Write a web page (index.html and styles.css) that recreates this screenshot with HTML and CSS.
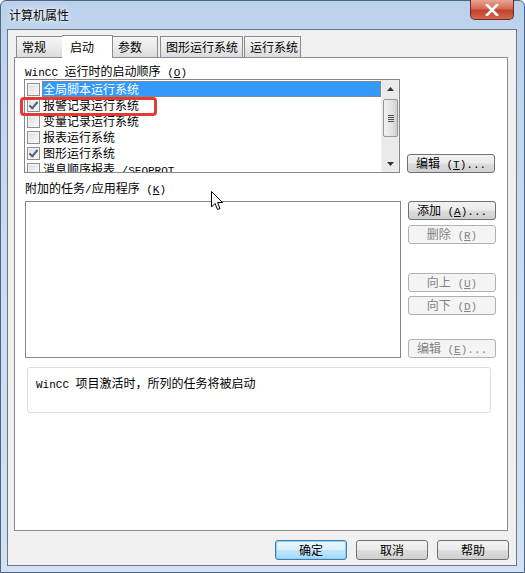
FILE: index.html
```html
<!DOCTYPE html>
<html lang="zh-CN">
<head>
<meta charset="UTF-8">
<title>计算机属性</title>
<link rel="stylesheet" href="styles.css">
</head>
<body>
<div class="window">
  <div class="titlebar">
    <span class="title">计算机属性</span>
    <div class="close">
      <svg width="14" height="12" viewBox="0 0 14 12"><path d="M2 1 L12 11 M12 1 L2 11" stroke="#fff" stroke-width="2.6" stroke-linecap="square"/></svg>
    </div>
  </div>
  <div class="client">
    <div class="tabs">
      <div class="tab w46">常规</div>
      <div class="tab tab-on w51">启动</div>
      <div class="tab w45">参数</div>
      <div class="tab w83 ml2">图形运行系统</div>
      <div class="tab w57 ml1">运行系统</div>
    </div>
    <div class="panel">
      <div class="label"><span class="lat">WinCC </span>运行时的启动顺序<span class="lat"> (<u>O</u>)</span></div>
      <div class="row">
        <div class="listbox list1">
          <div class="items">
            <div class="item"><span class="cb"></span><span class="txt sel">全局脚本运行系统</span></div>
            <div class="item"><span class="cb on"></span><span class="txt">报警记录运行系统</span></div>
            <div class="item"><span class="cb"></span><span class="txt">变量记录运行系统</span></div>
            <div class="item"><span class="cb"></span><span class="txt">报表运行系统</span></div>
            <div class="item"><span class="cb on"></span><span class="txt">图形运行系统</span></div>
            <div class="item"><span class="cb"></span><span class="txt">消息顺序报表<span class="lat"> /SEQPROT</span></span></div>
          </div>
          <div class="scrollbar">
            <div class="arrow"><svg width="7" height="4" viewBox="0 0 7 4"><path d="M0 4 L3.5 0 L7 4Z" fill="#333"/></svg></div>
            <div class="thumb"><span></span><span></span><span></span><span></span></div>
            <div class="track"></div>
            <div class="arrow"><svg width="7" height="4" viewBox="0 0 7 4"><path d="M0 0 L3.5 4 L7 0Z" fill="#333"/></svg></div>
          </div>
        </div>
        <div class="side bottom">
          <button class="btn">编辑<span class="lat"> (<u>T</u>)...</span></button>
        </div>
      </div>
      <div class="label label2">附加的任务<span class="lat">/</span>应用程序<span class="lat"> (<u>K</u>)</span></div>
      <div class="row">
        <div class="listbox list2"></div>
        <div class="side">
          <button class="btn">添加<span class="lat"> (<u>A</u>)...</span></button>
          <button class="btn off mt5">删除<span class="lat"> (<u>R</u>)</span></button>
          <button class="btn off mt29">向上<span class="lat"> (<u>U</u>)</span></button>
          <button class="btn off mt4">向下<span class="lat"> (<u>D</u>)</span></button>
          <button class="btn off mt24">编辑<span class="lat"> (<u>E</u>)...</span></button>
        </div>
      </div>
      <div class="info"><span class="lat">WinCC </span>项目激活时，所列的任务将被启动</div>
    </div>
    <div class="footer">
      <button class="btn big default">确定</button>
      <button class="btn big">取消</button>
      <button class="btn big">帮助</button>
    </div>
  </div>
  <div class="mark"></div>
  <svg class="cursor" width="13" height="20" viewBox="0 0 13 20"><path d="M0.5 0.5 L0.5 16 L4 12.5 L6.5 18.5 L9 17.5 L6.5 11.5 L11.5 11.5 Z" fill="#fff" stroke="#000" stroke-width="1"/></svg>
</div>
</body>
</html>
```

FILE: styles.css
```css
html, body { margin: 0; padding: 0; }
body { width: 525px; height: 573px; overflow: hidden; background: #fff; }

.window {
  position: relative;
  width: 525px; height: 573px;
  box-sizing: border-box;
  border: 1px solid #4f6683;
  border-radius: 6px 6px 0 0;
  background: linear-gradient(180deg, #bcd2ec 0%, #c9dbf0 40%, #d2e2f3 100%);
  padding: 0 7px 7px 6px;
  font-family: "Noto Sans CJK SC", sans-serif;
  font-size: 12px;
  color: #000;
}

/* latin part of the dialog text, narrow like the bitmap font */
.lat { font-family: "Liberation Mono", monospace; font-size: 11px; }

.titlebar { height: 28px; display: flex; align-items: center; }
.title {
  font-size: 12px;
  margin-left: 2px; margin-top: -2px;
  text-shadow: 0 0 6px #fff, 0 0 3px #fff;
}
.close {
  position: absolute; top: -1px; right: 10px;
  width: 44px; height: 20px; box-sizing: border-box;
  border: 1px solid #6e2a20; border-top: none;
  border-radius: 0 0 5px 5px;
  background: linear-gradient(180deg, #e8a596 0%, #d46a55 45%, #c2432c 55%, #d2694e 100%);
  display: flex; align-items: center; justify-content: center;
}

.client {
  height: 537px; box-sizing: border-box;
  border: 1px solid #6a7686;
  background: #f0f0f0;
  padding: 4px 8px 0 6px;
  display: flex; flex-direction: column;
}

.tabs { display: flex; height: 23px; padding-left: 2px; align-items: flex-end; }
.tab {
  height: 21px; box-sizing: border-box;
  border: 1px solid #898c95; border-bottom: none; border-right: none;
  background: linear-gradient(180deg, #f4f4f4 0%, #ebebeb 50%, #dcdcdc 100%);
  font-size: 12px;
  line-height: 19px; padding-left: 5px;
}
.tab + .tab { border-left: none; }
.tab:last-child, .tab.w83 { border-right: 1px solid #898c95; }
.tab.w45 { border-right: 1px solid #898c95; }
.tab.w46 { border-right: none; }
.tab-on {
  height: 23px; background: #fff;
  border: 1px solid #898c95; border-bottom: none;
  margin-bottom: -1px; position: relative; z-index: 1;
  padding-left: 8px; line-height: 21px;
}
.tab-on + .tab { border-left: none; }
.w46 { width: 46px; } .w51 { width: 51px; } .w45 { width: 45px; }
.w83 { width: 83px; } .w57 { width: 57px; }
.ml2 { margin-left: 2px; border-left: 1px solid #898c95 !important; }
.ml1 { margin-left: 1px; border-left: 1px solid #898c95 !important; }

.panel {
  height: 474px; box-sizing: border-box;
  border: 1px solid #898c95; background: #fff;
  padding: 0 0 0 9px;
}

.label { height: 16px; line-height: 16px; padding: 5px 0 0 1px; }
.label2 { padding-top: 7px; margin-bottom: 5px; }
.row { display: flex; gap: 7px; }

.listbox { box-sizing: border-box; border: 1px solid #828790; background: #fff; }
.list1 { width: 376px; height: 94px; display: flex; overflow: hidden; }
.list2 { width: 376px; height: 157px; margin-left: 1px; }

.items { flex: 1; padding: 1px 0 0 2px; overflow: hidden; }
.item { display: flex; align-items: center; height: 16px; }
.cb {
  width: 13px; height: 13px; box-sizing: border-box; flex: none;
  border: 1px solid #8e8f8f;
  background: linear-gradient(135deg, #dcdcdc 0%, #f0f0f0 60%, #fbfbfb 100%);
  box-shadow: inset 0 0 0 1px #f4f4f4;
  margin-right: 2px; position: relative;
}
.cb.on::after {
  content: ""; position: absolute; left: 3px; top: 0px;
  width: 3px; height: 7px;
  border: solid #4a5e91; border-width: 0 2px 2px 0;
  transform: rotate(40deg);
}
.txt { flex: 1; height: 16px; line-height: 16px; padding-left: 1px; white-space: nowrap; }
.txt.sel { background: #3399ff; color: #fff; outline: 1px dotted #c87a2a; outline-offset: -1px; }

.scrollbar {
  width: 17px; flex: none; display: flex; flex-direction: column;
  background: #eaeaea; border-left: 1px solid #f0f0f0;
}
.arrow { height: 17px; display: flex; align-items: center; justify-content: center; }
.thumb {
  height: 38px; margin: 2px 1px 0 1px; box-sizing: border-box;
  border: 1px solid #979797; border-radius: 2px;
  background: linear-gradient(90deg, #f1f1f1, #e2e2e2 60%, #cfcfcf);
  display: flex; flex-direction: column; align-items: center; justify-content: center; gap: 1px;
}
.thumb span { width: 6px; height: 1px; background: #4d4d4d; }
.track { flex: 1; }

.side { display: flex; flex-direction: column; }
.side.bottom { justify-content: flex-end; }
.btn {
  width: 88px; height: 19px; box-sizing: border-box; padding: 0;
  border: 1px solid #707070; border-radius: 3px;
  background: linear-gradient(180deg, #f2f2f2 0%, #ebebeb 48%, #dddddd 52%, #cfcfcf 100%);
  font-family: "Noto Sans CJK SC", sans-serif; font-size: 12px;
  color: #000; line-height: 16px; text-align: center;
}
.btn.off {
  border-color: #adb2b5; background: #f4f4f4; color: #838383;
}
.mt5 { margin-top: 5px; } .mt29 { margin-top: 29px; }
.mt4 { margin-top: 4px; } .mt24 { margin-top: 24px; }

.info {
  width: 464px; height: 46px; box-sizing: border-box;
  margin: 9px 0 0 3px;
  border: 1px solid #d5dfe5; border-radius: 3px;
  padding: 8px 0 0 8px; line-height: 14px;
}

.footer { display: flex; justify-content: flex-end; gap: 9px; padding-top: 9px; margin-right: -1px; }
.btn.big { width: 72px; height: 20px; font-size: 12px; }
.btn.default {
  border-color: #3c7fb1;
  background: linear-gradient(180deg, #eaf6fd 0%, #d9f0fc 48%, #bee6fd 52%, #a7d9f5 100%);
  box-shadow: inset 0 0 0 1px #8ecff6;
}

.mark {
  position: absolute; left: 19px; top: 96px;
  width: 137px; height: 19px; box-sizing: border-box;
  border: 3px solid #e53935; border-radius: 4px;
}
.cursor { position: absolute; left: 210px; top: 190px; }
```
